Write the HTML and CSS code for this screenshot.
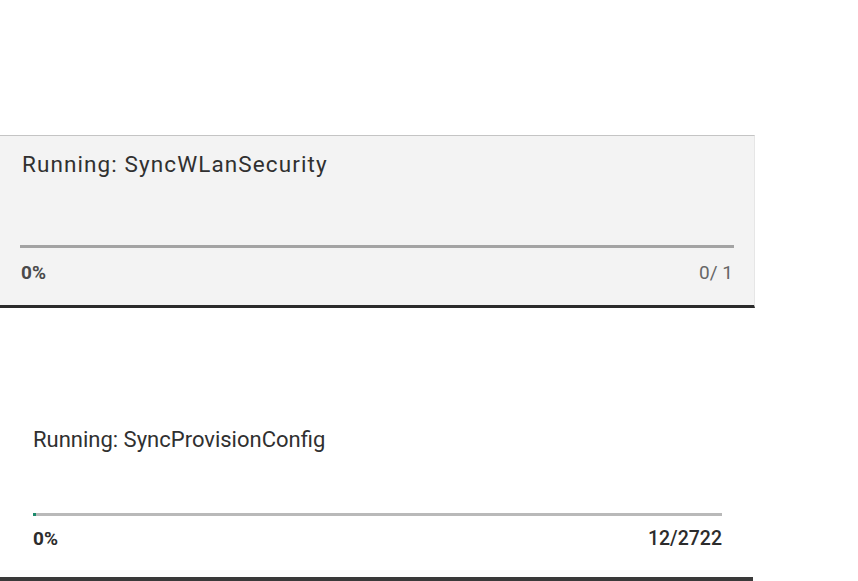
FILE: index.html
```html
<!DOCTYPE html>
<html>
<head>
<meta charset="utf-8">
<link rel="stylesheet" href="styles.css">
</head>
<body>
<div class="page">
  <div class="top-space"></div>
  <section class="panel panel-gray">
    <div class="title title-1">Running: SyncWLanSecurity</div>
    <div class="bar bar-1"><div class="fill" style="width:0%"></div></div>
    <div class="meta">
      <span class="pct">0%</span>
      <span class="count">0/ 1</span>
    </div>
  </section>
  <section class="panel panel-white">
    <div class="title title-2">Running: SyncProvisionConfig</div>
    <div class="bar bar-2"><div class="fill" style="width:3px"></div></div>
    <div class="meta">
      <span class="pct pct-2">0%</span>
      <span class="count count-2">12/2722</span>
    </div>
  </section>
  <div class="dark-bar"></div>
</div>
</body>
</html>
```
FILE: styles.css
```css
html, body {
  margin: 0;
  padding: 0;
  background: #ffffff;
}
body {
  font-family: Roboto, "Noto Sans", "Liberation Sans", sans-serif;
  color: #333;
  width: 858px;
  height: 581px;
  overflow: hidden;
}
.page {
  display: flex;
  flex-direction: column;
}
.top-space {
  height: 135px;
}
.panel {
  display: flex;
  flex-direction: column;
  box-sizing: border-box;
}
.panel-gray {
  width: 755px;
  background: #f3f3f3;
  border-top: 1px solid #c4c4c4;
  border-right: 1px solid #e6e6e6;
  border-bottom: 3px solid #2b2b2b;
  padding: 16px 21px 21px 22px;
}
.panel-white {
  width: 722px;
  padding: 120px 0 27px 33px;
}
.title {
  line-height: 24px;
  color: #303030;
  white-space: nowrap;
}
.title-1 {
  font-size: 22.5px;
  letter-spacing: 1.1px;
}
.title-2 {
  font-size: 22px;
}
.bar {
  height: 3px;
  background: #a3a3a3;
}
.bar-1 {
  margin-top: 69px;
  width: 714px;
  margin-left: -2px;
}
.bar-2 {
  margin-top: 61px;
  background: #b9b9b9;
}
.fill {
  height: 100%;
  background: #1b8a6b;
}
.meta {
  display: flex;
  justify-content: space-between;
  align-items: baseline;
  margin-top: 14px;
  line-height: 22px;
}
.panel-gray .meta {
  width: 712px;
  margin-left: -1px;
}
.panel-white .meta {
  margin-top: 12px;
}
.pct {
  font-size: 19px;
  font-weight: bold;
  color: #4a4a4a;
}
.pct-2 {
  font-size: 19px;
  color: #2c2c2c;
}
.count {
  font-size: 19px;
  color: #666;
}
.count-2 {
  font-size: 19.5px;
  font-weight: 500;
  color: #2c2c2c;
}
.dark-bar {
  width: 753px;
  height: 4px;
  background: #3a3a3a;
}
```
